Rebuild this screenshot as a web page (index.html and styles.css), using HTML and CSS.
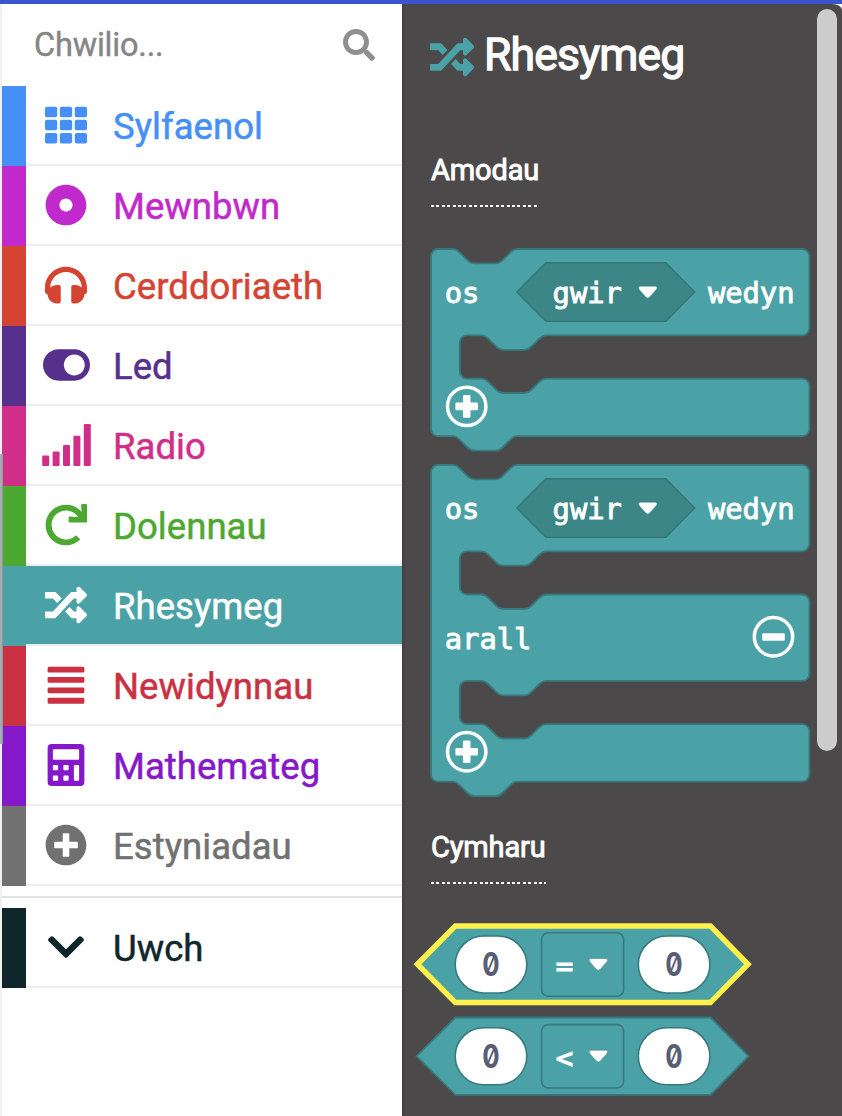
FILE: index.html
```html
<!DOCTYPE html>
<html lang="cy">
<head>
<meta charset="utf-8">
<title>Rhesymeg</title>
<link rel="stylesheet" href="styles.css">
</head>
<body>
<svg class="defs" width="0" height="0" aria-hidden="true">
  <defs>
    <symbol id="shuffle" viewBox="0 0 512 512"><path d="M504.971 359.029c9.373 9.373 9.373 24.569 0 33.941l-80 79.984c-15.01 15.01-40.971 4.49-40.971-16.971V416h-58.785a12.004 12.004 0 0 1-8.773-3.812l-70.556-75.596 53.333-57.143L352 336h32v-39.981c0-21.438 25.943-31.998 40.971-16.971l80 79.981zM12 176h84l52.781 56.551 53.333-57.143-70.556-75.596A11.999 11.999 0 0 0 122.785 96H12c-6.627 0-12 5.373-12 12v56c0 6.627 5.373 12 12 12zm372 0v39.984c0 21.46 25.961 31.98 40.971 16.971l80-79.984c9.373-9.373 9.373-24.569 0-33.941l-80-79.981C409.943 24.021 384 34.582 384 56.019V96h-58.785a12.004 12.004 0 0 0-8.773 3.812L96 336H12c-6.627 0-12 5.373-12 12v56c0 6.627 5.373 12 12 12h110.785c3.326 0 6.503-1.381 8.773-3.812L352 176h32z"/></symbol>
    <path id="caret" d="M2.2 0H17.3Q20.5 .8 18.2 3.6L12 10.6Q9.75 13 7.5 10.6L1.3 3.6Q-1 .8 2.2 0Z"/>
    <g id="add"><circle r="19.2" fill="none" stroke="#fff" stroke-width="3.5"/><path d="M-2.5-11.3h5q1.3 0 1.3 1.3v6.2h6.2q1.3 0 1.3 1.3v5q0 1.3-1.3 1.3h-6.2v6.2q0 1.3-1.3 1.3h-5q-1.3 0-1.3-1.3v-6.2h-6.2q-1.3 0-1.3-1.3v-5q0-1.3 1.3-1.3h6.2v-6.2q0-1.3 1.3-1.3z" fill="#fff"/></g>
    <g id="condition">
      <path class="field" d="M516.9 292 545.9 262.9H665.800L694.700 292 665.800 321.200H545.900Z"/>
      <text class="code" x="444.8" y="303.2" textLength="34.6">os</text>
      <text class="code" x="552.6" y="303.2" textLength="69.2">gwir</text>
      <use class="caret" href="#caret" x="638" y="286.2"/>
      <text class="code" x="708" y="303.2" textLength="86.5">wedyn</text>
    </g>
    <g id="comparison">
      <rect class="number" x="455.2" y="936" width="71.6" height="57" rx="28.5"/>
      <rect class="number" x="638.3" y="936" width="71.6" height="57" rx="28.5"/>
      <rect class="select" x="541.6" y="932.8" width="82" height="63.4" rx="6.5"/>
      <use class="caret" href="#caret" x="588.6" y="958.4"/>
      <text class="digit" transform="translate(490.9 976) scale(.78 1)">0</text>
      <text class="digit" transform="translate(674 976) scale(.78 1)">0</text>
    </g>
  </defs>
</svg>

<header class="topbar"></header>
<main class="editor">
  <div class="gutter"><div class="gutter-thumb"></div></div>
  <nav class="toolbox">
    <div class="search"><span>Chwilio...</span>
      <svg class="search-icon" viewBox="0 0 512 512"><path d="M505 442.7 405.3 343c-4.5-4.5-10.6-7-17-7H372c27.6-35.3 44-79.7 44-128C416 93.1 322.9 0 208 0S0 93.1 0 208s93.1 208 208 208c48.3 0 92.7-16.4 128-44v16.3c0 6.4 2.5 12.5 7 17l99.7 99.7c9.4 9.4 24.6 9.4 33.9 0l28.3-28.3c9.4-9.4 9.4-24.6.1-34zM208 336c-70.7 0-128-57.2-128-128 0-70.7 57.2-128 128-128 70.7 0 128 57.2 128 128 0 70.7-57.2 128-128 128z"/></svg>
    </div>
    <div class="cat basic"><div class="row"><svg class="icon" viewBox="0 0 512 512"><g><rect y="32" width="149" height="128" rx="24"/><rect x="181" y="32" width="150" height="128" rx="24"/><rect x="363" y="32" width="149" height="128" rx="24"/><rect y="192" width="149" height="128" rx="24"/><rect x="181" y="192" width="150" height="128" rx="24"/><rect x="363" y="192" width="149" height="128" rx="24"/><rect y="352" width="149" height="128" rx="24"/><rect x="181" y="352" width="150" height="128" rx="24"/><rect x="363" y="352" width="149" height="128" rx="24"/></g></svg><span>Sylfaenol</span></div></div>
    <div class="cat input"><div class="row"><svg class="icon" viewBox="0 0 512 512"><path d="M256 8C119 8 8 119 8 256s111 248 248 248 248-111 248-248S393 8 256 8zm80 248c0 44.1-35.9 80-80 80s-80-35.9-80-80 35.9-80 80-80 80 35.9 80 80z"/></svg><span>Mewnbwn</span></div></div>
    <div class="cat music"><div class="row"><svg class="icon" viewBox="0 0 512 512"><path d="M256 32C114.52 32 0 146.497 0 288v48a32 32 0 0 0 17.689 28.622l14.383 7.191C34.083 431.903 83.421 480 144 480h24c13.255 0 24-10.745 24-24V280c0-13.255-10.745-24-24-24h-24c-31.342 0-59.671 12.879-80 33.627V288c0-105.869 86.131-192 192-192s192 86.131 192 192v1.627C427.671 268.879 399.342 256 368 256h-24c-13.255 0-24 10.745-24 24v176c0 13.255 10.745 24 24 24h24c60.579 0 109.917-48.098 111.928-108.187l14.382-7.191A32 32 0 0 0 512 336v-48c0-141.479-114.496-256-256-256z"/></svg><span>Cerddoriaeth</span></div></div>
    <div class="cat led"><div class="row"><svg class="icon wide" viewBox="0 0 576 512"><path d="M384 64H192C86 64 0 150 0 256s86 192 192 192h192c106 0 192-86 192-192S490 64 384 64zm0 320c-70.8 0-128-57.3-128-128 0-70.8 57.3-128 128-128 70.8 0 128 57.3 128 128 0 70.8-57.3 128-128 128z"/></svg><span>Led</span></div></div>
    <div class="cat radio"><div class="row"><svg class="icon signal" viewBox="0 0 49 42"><rect x=".2" y="31.5" width="7" height="10.5" rx="1.2"/><rect x="10.6" y="27.5" width="7" height="14.5" rx="1.2"/><rect x="21" y="21" width="7" height="21" rx="1.2"/><rect x="31.4" y="11.7" width="7" height="30.3" rx="1.2"/><rect x="41.8" y="0" width="7" height="42" rx="1.2"/></svg><span>Radio</span></div></div>
    <div class="cat loops"><div class="row"><svg class="icon" viewBox="0 0 512 512"><path d="M500.33 0h-47.41a12 12 0 0 0-12 12.57l4 82.76A247.42 247.42 0 0 0 256 8C119.34 8 7.9 119.53 8 256.19 8.1 393.07 119.1 504 256 504a247.1 247.1 0 0 0 166.18-63.91 12 12 0 0 0 .48-17.43l-34-34a12 12 0 0 0-16.38-.55A176 176 0 1 1 402.1 157.8l-101.53-4.87a12 12 0 0 0-12.57 12v47.41a12 12 0 0 0 12 12h200.33a12 12 0 0 0 12-12V12a12 12 0 0 0-12-12z"/></svg><span>Dolennau</span></div></div>
    <div class="cat logic selected"><div class="row"><svg class="icon"><use href="#shuffle"/></svg><span>Rhesymeg</span></div></div>
    <div class="cat variables"><div class="row"><svg class="icon" viewBox="0 0 512 512"><rect x="32" y="32" width="448" height="72" rx="16"/><rect x="32" y="158" width="448" height="72" rx="16"/><rect x="32" y="286" width="448" height="72" rx="16"/><rect x="32" y="412" width="448" height="72" rx="16"/></svg><span>Newidynnau</span></div></div>
    <div class="cat maths"><div class="row"><svg class="icon" viewBox="0 0 512 512"><path fill-rule="evenodd" d="M80 0h352q48 0 48 48v416q0 48-48 48H80q-48 0-48-48V48Q32 0 80 0zM108 64q-12 0-12 12v104q0 12 12 12h296q12 0 12-12V76q0-12-12-12zM108 256q-12 0-12 12v40q0 12 12 12h40q12 0 12-12v-40q0-12-12-12zM236 256q-12 0-12 12v40q0 12 12 12h40q12 0 12-12v-40q0-12-12-12zM108 384q-12 0-12 12v40q0 12 12 12h40q12 0 12-12v-40q0-12-12-12zM236 384q-12 0-12 12v40q0 12 12 12h40q12 0 12-12v-40q0-12-12-12zM364 256q-12 0-12 12v168q0 12 12 12h40q12 0 12-12V268q0-12-12-12z"/></svg><span>Mathemateg</span></div></div>
    <div class="cat extensions"><div class="row"><svg class="icon" viewBox="0 0 512 512"><path d="M256 8C119 8 8 119 8 256s111 248 248 248 248-111 248-248S393 8 256 8zm144 276c0 6.6-5.4 12-12 12h-92v92c0 6.6-5.4 12-12 12h-56c-6.6 0-12-5.4-12-12v-92h-92c-6.6 0-12-5.4-12-12v-56c0-6.6 5.4-12 12-12h92v-92c0-6.6 5.4-12 12-12h56c6.6 0 12 5.4 12 12v92h92c6.6 0 12 5.4 12 12v56z"/></svg><span>Estyniadau</span></div></div>
    <div class="divider"></div>
    <div class="cat advanced"><div class="row"><svg class="icon" viewBox="0 0 512 512"><path d="M239.03 381.476 44.69 187.13c-9.37-9.37-9.37-24.57 0-33.94l22.67-22.67c9.36-9.36 24.52-9.37 33.9-.04L256 284.5l154.75-154.02c9.38-9.34 24.54-9.32 33.9.04l22.67 22.67c9.37 9.37 9.37 24.57 0 33.94L272.97 381.47c-9.37 9.37-24.57 9.37-33.94.006z"/></svg><span>Uwch</span></div></div>
  </nav>

  <section class="flyout">
    <div class="blocks">
      <h1 class="title"><svg class="title-icon"><use href="#shuffle"/></svg><span>Rhesymeg</span></h1>
      <h2 class="group first"><span>Amodau</span></h2>
      <svg class="block if" viewBox="428 246 384 208">
        <path class="shape" transform="translate(431 249) scale(1.8)" d="M0 4A4 4 0 0 1 4 0H12c2 0 3 1 4 2l4 4c1 1 2 2 4 2h12c2 0 3-1 4-2l4-4c1-1 2-2 4-2H206.200a4 4 0 0 1 4 4V44a4 4 0 0 1-4 4H64c-2 0-3 1-4 2l-4 4c-1 1-2 2-4 2H40c-2 0-3-1-4-2l-4-4c-1-1-2-2-4-2H20a4 4 0 0 0-4 4V68a4 4 0 0 0 4 4H28c2 0 3 1 4 2l4 4c1 1 2 2 4 2h12c2 0 3-1 4-2l4-4c1-1 2-2 4-2H206.200a4 4 0 0 1 4 4V100a4 4 0 0 1-4 4H48c-2 0-3 1-4 2l-4 4c-1 1-2 2-4 2H24c-2 0-3-1-4-2l-4-4c-1-1-2-2-4-2H4a4 4 0 0 1-4-4Z"/>
        <use href="#condition"/>
        <use href="#add" x="466.7" y="406.4"/>
      </svg>
      <svg class="block if-else" viewBox="428 462 384 338">
        <path class="shape" transform="translate(431 464.9) scale(1.8)" d="M0 4A4 4 0 0 1 4 0H12c2 0 3 1 4 2l4 4c1 1 2 2 4 2h12c2 0 3-1 4-2l4-4c1-1 2-2 4-2H206.200a4 4 0 0 1 4 4V44a4 4 0 0 1-4 4H64c-2 0-3 1-4 2l-4 4c-1 1-2 2-4 2H40c-2 0-3-1-4-2l-4-4c-1-1-2-2-4-2H20a4 4 0 0 0-4 4V68a4 4 0 0 0 4 4H28c2 0 3 1 4 2l4 4c1 1 2 2 4 2h12c2 0 3-1 4-2l4-4c1-1 2-2 4-2H206.200a4 4 0 0 1 4 4V116a4 4 0 0 1-4 4H64c-2 0-3 1-4 2l-4 4c-1 1-2 2-4 2H40c-2 0-3-1-4-2l-4-4c-1-1-2-2-4-2H20a4 4 0 0 0-4 4V140a4 4 0 0 0 4 4H28c2 0 3 1 4 2l4 4c1 1 2 2 4 2h12c2 0 3-1 4-2l4-4c1-1 2-2 4-2H206.200a4 4 0 0 1 4 4V172a4 4 0 0 1-4 4H48c-2 0-3 1-4 2l-4 4c-1 1-2 2-4 2H24c-2 0-3-1-4-2l-4-4c-1-1-2-2-4-2H4a4 4 0 0 1-4-4Z"/>
        <use href="#condition" y="216"/>
        <text class="code" x="444.8" y="649" textLength="86.5">arall</text>
        <circle cx="773.5" cy="636.8" r="19.2" fill="none" stroke="#fff" stroke-width="3.5"/>
        <rect x="762.2" y="633.2" width="22.6" height="7.5" rx="1.3" fill="#fff"/>
        <use href="#add" x="466.7" y="751.8"/>
      </svg>
      <h2 class="group second"><span>Cymharu</span></h2>
      <svg class="block compare" viewBox="412 920 342 178">
        <path class="shape highlight" d="M417.400 964.200 455.400 925.900H710.400L748 964.200 710.400 1002.600H455.400Z"/>
        <use href="#comparison"/>
        <text class="code bold" x="555.8" y="976" textLength="17.3">=</text>
        <path class="shape thin" d="M416.600 1056.200 455.400 1017.500H710.600L748.600 1056.200 710.600 1094.900H455.400Z"/>
        <use href="#comparison" y="91.8"/>
        <text class="code bold" x="555.8" y="1068" textLength="17.3">&lt;</text>
      </svg>
    </div>
    <div class="scrollbar"><div class="thumb"></div></div>
  </section>
</main>
</body>
</html>
```
FILE: styles.css
```css
* { box-sizing: border-box; }
body { margin: 0; height: 1116px; overflow: hidden; background: #fff; font-family: Roboto, "Liberation Sans", sans-serif; }
.defs { position: absolute; }
.topbar { height: 4px; background: #3b54ce; }
.editor { display: flex; height: 1112px; }

.gutter { width: 2px; padding-top: 450px; background: #f0f0f0; z-index: 1; }
.gutter-thumb { width: 3px; height: 290px; background: #a5acaf; border-right: 1px solid #8f989b; }

.toolbox { width: 400px; display: flex; flex-direction: column; }
.search { height: 82px; display: flex; align-items: center; justify-content: space-between; padding: 0 27px 0 32px; color: #858585; font-size: 32.5px; letter-spacing: -.2px; -webkit-text-stroke: .4px currentColor; }
.search-icon { width: 32px; height: 32px; fill: #8f8f8f; }
.cat { height: 80px; padding-left: 24px; background: linear-gradient(var(--c), var(--c)) left / 24px 100% no-repeat; color: var(--c); }
.row { height: 80px; display: flex; align-items: center; gap: 26px; padding-left: 19px; border-bottom: 2px solid #ebeeee; font-size: 36.5px; line-height: 42px; -webkit-text-stroke: .5px currentColor; }
.icon { width: 42px; height: 42px; margin: 0; fill: currentColor; flex: none; }
.row .icon { position: relative; left: .3px; -webkit-text-stroke: 0; }
.row span { padding-top: 3px; letter-spacing: .05px; }
.icon.wide { width: 47px; margin: 0 -2.5px; }
.icon.signal { width: 49px; margin: 0 -3.5px; }
.selected .row { color: #fff; background: var(--c); background-clip: padding-box; }
.divider { height: 22px; border-top: 10px solid #fff; border-bottom: 10px solid #fff; background: #e3e3e3; }
.basic { --c: #458ff7; }
.input { --c: #c129cc; }
.music { --c: #d54333; }
.led { --c: #56308c; }
.radio { --c: #d12e8a; }
.loops { --c: #4ca830; }
.logic { --c: #4aa2a7; }
.variables { --c: #ca3142; }
.maths { --c: #8519c9; }
.extensions { --c: #717171; }
.advanced { --c: #0f272b; }

.flyout { width: 440px; display: flex; justify-content: space-between; background: #4c494a; border-top-right-radius: 10px 6px; box-shadow: inset 3px 0 3px -2px #3e3b3c; }
.blocks { width: 411px; display: flex; flex-direction: column; align-items: flex-start; }
.title { display: flex; align-items: center; gap: 10px; height: 60px; margin: 21px 0 0 28px; color: #fff; font-size: 44.5px; font-weight: 400; line-height: 52px; letter-spacing: -.85px; -webkit-text-stroke: 1.3px #fff; }
.title-icon { width: 44px; height: 44px; margin-top: 4px; fill: #4aa2a7; -webkit-text-stroke: 0; }
.group { height: 54px; margin: 0 0 0 29px; color: #fff; font-size: 29px; font-weight: 400; line-height: 34px; letter-spacing: -.15px; -webkit-text-stroke: .9px #fff; background: repeating-linear-gradient(90deg, #fff 0 3px, transparent 3px 5.4px) left bottom / 100% 2px no-repeat; }
.group.first { margin-top: 68px; }
.group.second { margin-top: 30px; }
.block { display: block; flex: none; }
.block.if { width: 384px; height: 208px; margin: 39px 0 0 26px; }
.block.if-else { width: 384px; height: 338px; margin: 8px 0 0 26px; }
.block.compare { width: 342px; height: 178px; margin: 36px 0 0 10px; }
.shape { fill: #4aa2a7; stroke: #37797d; stroke-width: 1; }
.shape.thin { stroke-width: 1.8; }
.shape.highlight { stroke: #fff04c; stroke-width: 5.5; }
.field { fill: #3c8688; stroke: #37777b; stroke-width: 1.6; }
.number { fill: #fff; stroke: #37797d; stroke-width: 1.6; }
.select { fill: none; stroke: #37797d; stroke-width: 1.6; }
.caret { fill: #fff; stroke: #37797d; stroke-width: .5; }
.code { fill: #fff; font: 28.8px "DejaVu Sans Mono", monospace; stroke: #fff; stroke-width: .9; }
.code.bold { stroke-width: 1.2; }
.digit { fill: #575e75; font: 700 33px Inter, sans-serif; font-feature-settings: "zero"; text-anchor: middle; }
.scrollbar { width: 26px; padding: 5px 0 0 1px; }
.thumb { width: 20px; height: 742px; border-radius: 10px; background: #ccc; }
```
